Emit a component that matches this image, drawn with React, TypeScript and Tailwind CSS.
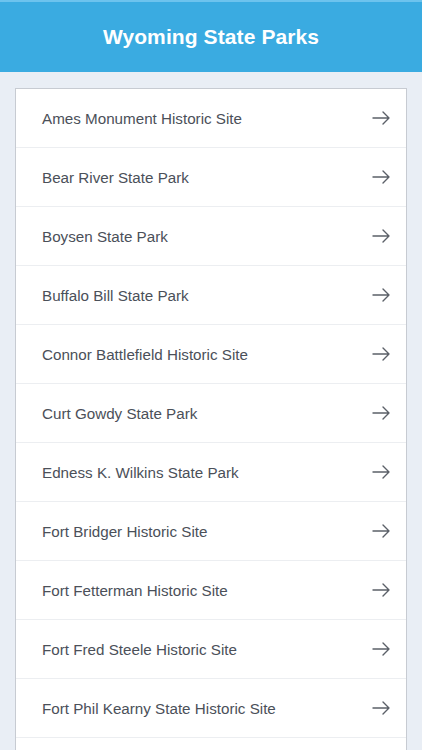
import React from "react";

const parks = [
  "Ames Monument Historic Site",
  "Bear River State Park",
  "Boysen State Park",
  "Buffalo Bill State Park",
  "Connor Battlefield Historic Site",
  "Curt Gowdy State Park",
  "Edness K. Wilkins State Park",
  "Fort Bridger Historic Site",
  "Fort Fetterman Historic Site",
  "Fort Fred Steele Historic Site",
  "Fort Phil Kearny State Historic Site",
];

function Arrow() {
  return (
    <svg width="18" height="14" viewBox="0 0 18 14" fill="none" stroke="#5b6068" strokeWidth="1.4" strokeLinecap="round" strokeLinejoin="round">
      <path d="M1 7h16M11 1l6 6-6 6" />
    </svg>
  );
}

export default function App() {
  return (
    <div className="w-[422px] h-[750px] overflow-hidden bg-[#e9eef5]" style={{ fontFamily: '"Liberation Sans", Arial, sans-serif' }}>
      <div className="h-[72px] bg-[#3aabe1] border-t-2 border-[#6cc3ee] flex items-center justify-center">
        <h1 className="text-white font-bold text-[21px] tracking-[0.1px]">Wyoming State Parks</h1>
      </div>
      <div className="px-[15px] pt-[16px]">
        <div className="bg-white border-[1.5px] border-[#c7cbd2]">
          {parks.map((p) => (
            <div key={p} className="h-[59px] flex items-center justify-between pl-[26px] pr-[16px] border-b border-[#eceef1]">
              <span className="text-[15.2px] text-[#4b5059] pt-[2px]">{p}</span>
              <Arrow />
            </div>
          ))}
          <div className="h-[59px]" />
        </div>
      </div>
    </div>
  );
}
